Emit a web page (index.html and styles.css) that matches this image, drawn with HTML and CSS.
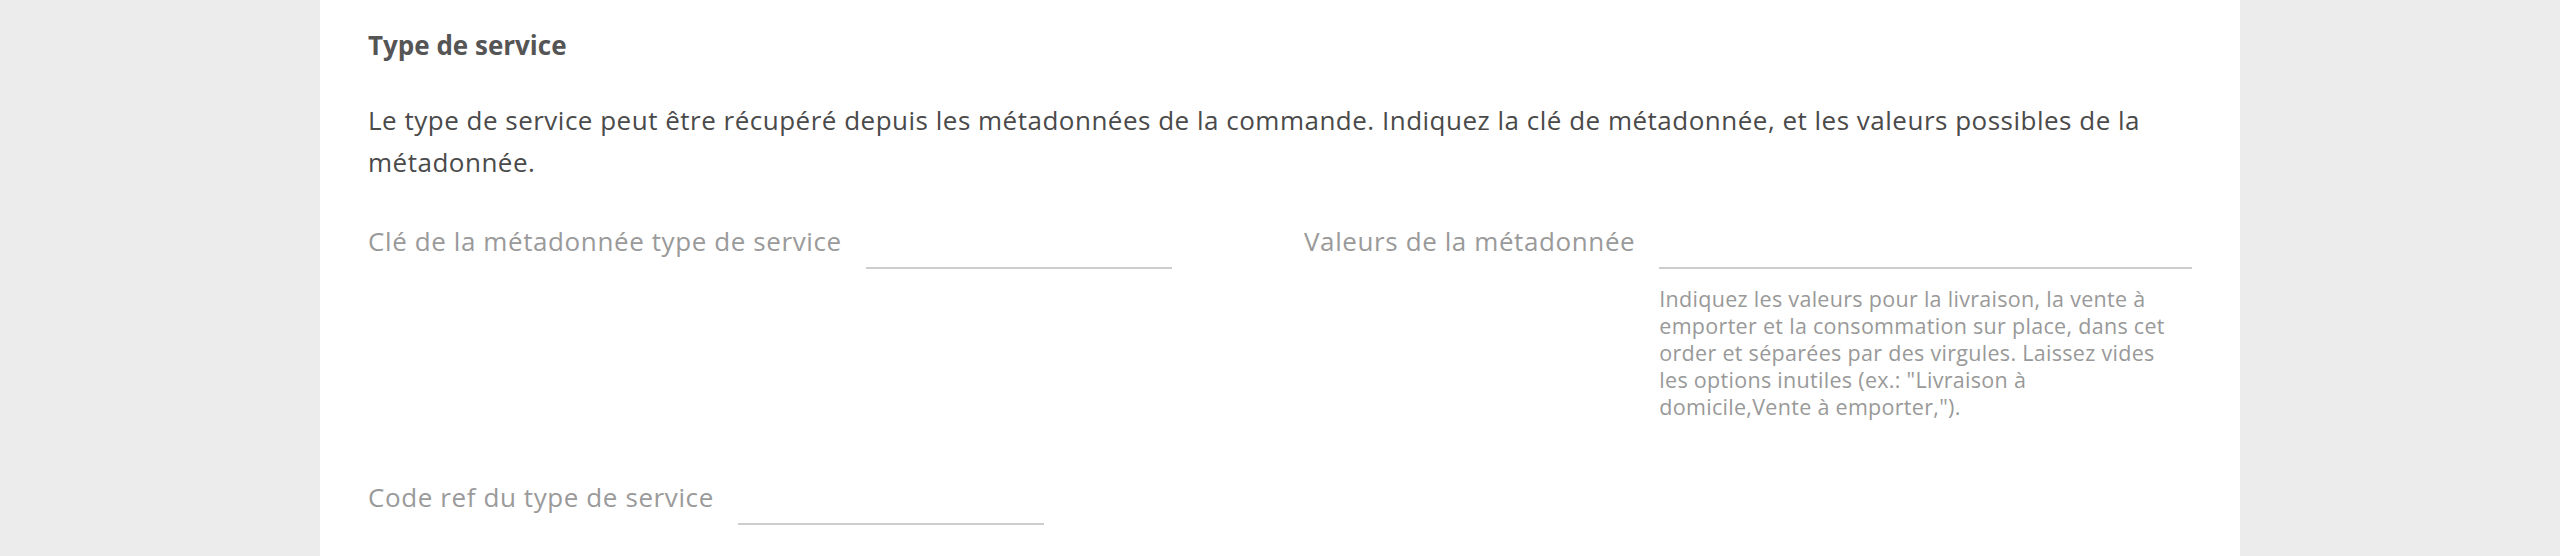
FILE: index.html
```html
<!DOCTYPE html>
<html lang="fr">
<head>
<meta charset="utf-8">
<title>Type de service</title>
<link rel="stylesheet" href="styles.css">
</head>
<body>
<main class="card">
  <h3 class="section-title">Type de service</h3>
  <p class="section-desc">Le type de service peut être récupéré depuis les métadonnées de la commande. Indiquez la clé de métadonnée, et les valeurs possibles de la métadonnée.</p>
  <div class="grid">
    <div class="field">
      <label class="field-label" for="meta-key">Clé de la métadonnée type de service</label>
      <input class="field-input fixed" id="meta-key" type="text">
    </div>
    <div class="field">
      <label class="field-label" for="meta-values">Valeurs de la métadonnée</label>
      <div class="field-body">
        <input class="field-input" id="meta-values" type="text">
        <p class="field-help">Indiquez les valeurs pour la livraison, la vente à<br>emporter et la consommation sur place, dans cet<br>order et séparées par des virgules. Laissez vides<br>les options inutiles (ex.: "Livraison à<br>domicile,Vente à emporter,").</p>
      </div>
    </div>
    <div class="field">
      <label class="field-label" for="ref-code">Code ref du type de service</label>
      <input class="field-input fixed" id="ref-code" type="text">
    </div>
  </div>
</main>
</body>
</html>
```
FILE: styles.css
```css
html, body {
  margin: 0;
  padding: 0;
  background: #ececec;
  font-family: "Open Sans", "Noto Sans", sans-serif;
}
.card {
  box-sizing: border-box;
  width: 1920px;
  min-height: 556px;
  margin: 0 auto;
  background: #ffffff;
  padding: 27px 48px 0 48px;
}
.section-title {
  margin: 0;
  font-size: 26px;
  line-height: 36px;
  font-weight: 700;
  color: #555555;
}
.section-desc {
  margin: 36px 0 0 0;
  font-size: 26px;
  line-height: 42px;
  letter-spacing: 0.5px;
  color: #4a4a4a;
}
.grid {
  display: grid;
  grid-template-columns: 888px 888px;
  column-gap: 48px;
  row-gap: 57px;
  margin-top: 38px;
}
.field {
  display: flex;
  align-items: flex-start;
  gap: 24px;
}
.field-label {
  font-size: 26px;
  line-height: 40px;
  letter-spacing: 0.6px;
  color: #9a9a9a;
  white-space: nowrap;
}
.field-body {
  flex: 1;
  display: flex;
  flex-direction: column;
}
.field-input {
  box-sizing: border-box;
  height: 48px;
  border: none;
  border-bottom: 2px solid #cdcdcd;
  background: transparent;
  outline: none;
  padding: 0;
  font: inherit;
  font-size: 26px;
}
.field-input.fixed {
  width: 306px;
}
.field-body .field-input {
  width: 100%;
}
.field-help {
  margin: 16px 0 0 0;
  font-size: 21.5px;
  line-height: 27px;
  letter-spacing: 0.3px;
  color: #999999;
  white-space: nowrap;
}
```
